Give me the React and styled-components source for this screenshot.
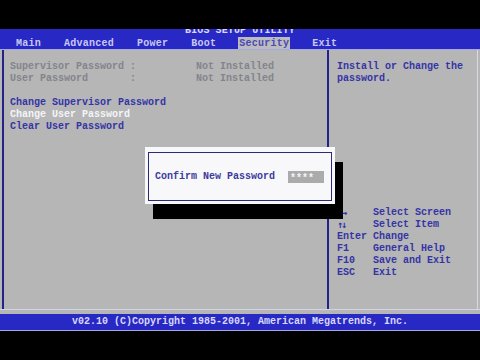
import React from "react";
import styled, { createGlobalStyle } from "styled-components";

const GlobalStyle = createGlobalStyle`
  html, body {
    margin: 0;
    padding: 0;
    background: #000;
  }
  body {
    font-family: "Liberation Mono", "DejaVu Sans Mono", monospace;
    font-size: 10px;
    font-weight: bold;
  }
`;

const Screen = styled.div`
  width: 480px;
  height: 360px;
  background: #000;
  display: flex;
  flex-direction: column;
  position: relative;
  overflow: hidden;
`;

const TopBlack = styled.div`
  height: 29px;
`;

const MenuBar = styled.div`
  height: 20px;
  background: #2828c4;
  overflow: hidden;
  display: flex;
  flex-direction: column;
  border-bottom: 1px solid #a8a8e0;
`;

const Title = styled.div`
  height: 7px;
  margin-top: -3px;
  line-height: 10px;
  text-align: center;
  color: #d8d8ff;
  letter-spacing: 0.1px;
`;

const Tabs = styled.div`
  display: flex;
  gap: 21px;
  padding-left: 15px;
  margin-top: 4px;
`;

const Tab = styled.div`
  padding: 0 1px;
  height: 13px;
  line-height: 13px;
  letter-spacing: 0.25px;
  color: ${(p) => (p.$active ? "#4a4ab8" : "#c8c8f4")};
  background: ${(p) => (p.$active ? "#bcbcbc" : "transparent")};
`;

const Main = styled.div`
  height: 259px;
  background: #b6b6b6;
  display: grid;
  grid-template-columns: 329px 151px;
  border-bottom: 1px solid #d4d4e8;
`;

const LeftPanel = styled.div`
  margin-left: 2px;
  border-left: 2px solid #22228a;
  border-right: 2px solid #22228a;
  padding: 11px 0 0 6px;
  line-height: 12px;
  white-space: pre;
`;

const RightPanel = styled.div`
  padding: 11px 0 30px 8px;
  border-right: 1px solid #d8d8ec;
  margin-right: 2px;
  display: flex;
  flex-direction: column;
  line-height: 12px;
  color: #3434a6;
`;

const Line = styled.div`
  height: 12px;
  color: ${(p) =>
    p.$tone === "gray" ? "#84848c" : p.$tone === "white" ? "#f4f4f8" : "#3434a6"};
`;

const Arrows = styled.span`
  font-family: "DejaVu Sans Mono", monospace;
  font-size: 10px;
  letter-spacing: -2px;
`;

const HelpText = styled.div`
  width: 140px;
`;

const Keys = styled.div`
  margin-top: auto;
  display: grid;
  grid-template-columns: 36px 1fr;
`;

const Gap = styled.div`
  height: 4px;
  background: #b6b6b6;
`;

const BottomBar = styled.div`
  height: 16px;
  background: #2828c4;
  border-bottom: 1px solid #a8a8e0;
  color: #d8d8ff;
  text-align: center;
  line-height: 16px;
`;

const Dialog = styled.div`
  position: absolute;
  left: 145px;
  top: 147px;
  width: 190px;
  height: 57px;
  box-sizing: border-box;
  padding: 5px 3px 3px 3px;
  background: #f8f8fa;
  box-shadow: 8px 15px 0 0 #000;
`;

const DialogInner = styled.div`
  height: 100%;
  box-sizing: border-box;
  border: 1px solid #2a2a78;
  display: flex;
  align-items: center;
  padding-left: 6px;
  color: #3a3aa0;
`;

const PasswordField = styled.div`
  margin-left: 13px;
  width: 36px;
  height: 12px;
  line-height: 12px;
  padding: 2px 0 0 2px;
  box-sizing: border-box;
  background: #ababab;
  color: #f4f4f4;
`;

const tabs = ["Main", "Advanced", "Power", "Boot", "Security", "Exit"];

const keys = [
  [<Arrows>{"\u2190\u2192"}</Arrows>, "Select Screen"],
  [<Arrows>{"\u2191\u2193"}</Arrows>, "Select Item"],
  ["Enter", "Change"],
  ["F1", "General Help"],
  ["F10", "Save and Exit"],
  ["ESC", "Exit"],
];

export default function App() {
  return (
    <>
      <GlobalStyle />
      <Screen>
        <TopBlack />
        <MenuBar>
          <Title>BIOS SETUP UTILITY</Title>
          <Tabs>
            {tabs.map((t) => (
              <Tab key={t} $active={t === "Security"}>
                {t}
              </Tab>
            ))}
          </Tabs>
        </MenuBar>
        <Main>
          <LeftPanel>
            <Line $tone="gray">{"Supervisor Password :          Not Installed"}</Line>
            <Line $tone="gray">{"User Password       :          Not Installed"}</Line>
            <Line />
            <Line>Change Supervisor Password</Line>
            <Line $tone="white">Change User Password</Line>
            <Line>Clear User Password</Line>
          </LeftPanel>
          <RightPanel>
            <HelpText>Install or Change the password.</HelpText>
            <Keys>
              {keys.map(([k, d]) => (
                <React.Fragment key={d}>
                  <Line>{k}</Line>
                  <Line>{d}</Line>
                </React.Fragment>
              ))}
            </Keys>
          </RightPanel>
        </Main>
        <Gap />
        <BottomBar>v02.10 (C)Copyright 1985-2001, American Megatrends, Inc.</BottomBar>
        <Dialog>
          <DialogInner>
            Confirm New Password
            <PasswordField>****</PasswordField>
          </DialogInner>
        </Dialog>
      </Screen>
    </>
  );
}
